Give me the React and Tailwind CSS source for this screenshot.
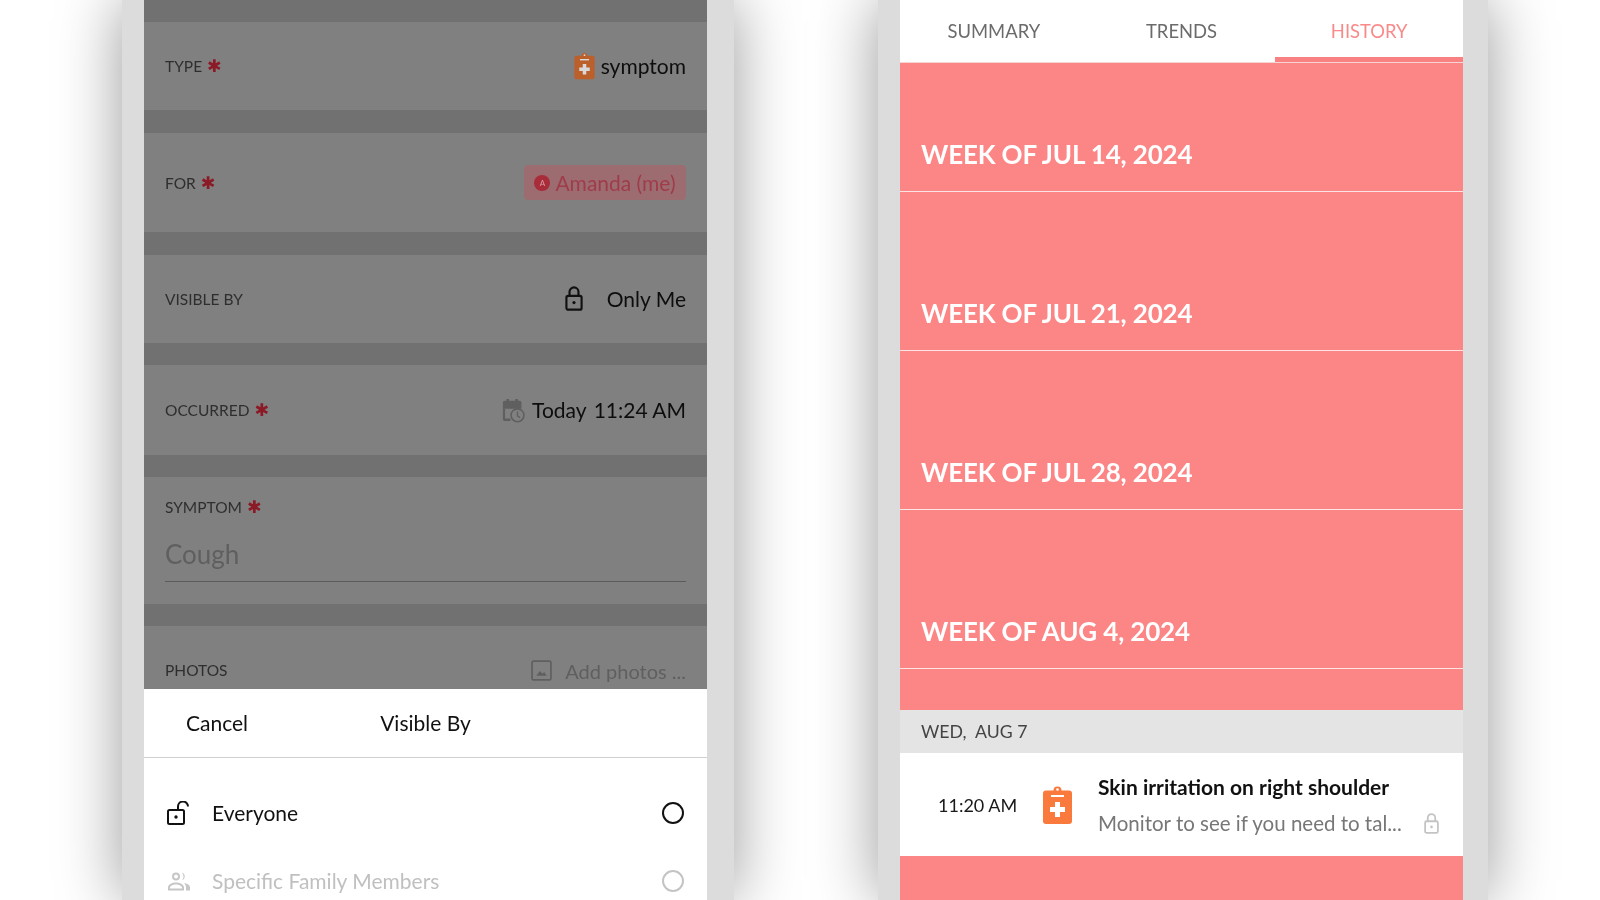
const LATO = { fontFamily: "Lato, 'Open Sans', sans-serif" };

function Clipboard({ className, fill = "#f97a3c", cross = "#fff" }) {
  return (
    <svg viewBox="0 0 30 40" className={className}>
      <path d="M11 5.5a4 4 0 0 1 8 0h7.5a3 3 0 0 1 3 3V36a3 3 0 0 1-3 3h-23a3 3 0 0 1-3-3V8.500a3 3 0 0 1 3-3z" fill={fill} />
      <circle cx="15" cy="4.500" r="1.300" fill={cross} />
      <rect x="8.500" y="10" width="13" height="2" fill={cross} />
      <path d="M12.500 17h5v5h5v5h-5v5h-5v-5h-5v-5h5z" fill={cross} />
    </svg>
  );
}

function Lock({ className, color = "#111" }) {
  return (
    <svg viewBox="0 0 20 28" className={className} fill="none" stroke={color} strokeWidth="2.400">
      <rect x="1.500" y="11" width="17" height="15.500" rx="2" />
      <path d="M5 11V6.500a5 5 0 0 1 10 0V11" />
      <circle cx="10" cy="18.500" r="1.800" fill={color} stroke="none" />
    </svg>
  );
}

function OpenLock({ className }) {
  return (
    <svg viewBox="0 0 24 24" className={className} fill="none" stroke="#111" strokeWidth="2">
      <rect x="1" y="9" width="16" height="14" rx="1.500" />
      <path d="M11 9V5.500a5 5 0 0 1 10 0" />
      <circle cx="9" cy="16" r="1.700" fill="#111" stroke="none" />
    </svg>
  );
}

function CalendarClock({ className }) {
  return (
    <svg viewBox="0 0 26 28" className={className}>
      <path d="M1 5a2 2 0 0 1 2-2h2V1h3v2h7V1h3v2h2a2 2 0 0 1 2 2v7H1z" fill="#5f5f5f" />
      <path d="M1 12h2.500v11h6v3H3a2 2 0 0 1-2-2z" fill="#5f5f5f" />
      <circle cx="17.500" cy="19.500" r="7.300" fill="#808080" stroke="#5f5f5f" strokeWidth="1.800" />
      <path d="M17.500 15v5l3 2" fill="none" stroke="#5f5f5f" strokeWidth="1.500" />
    </svg>
  );
}

function ImageIcon({ className }) {
  return (
    <svg viewBox="0 0 20 20" className={className} fill="none" stroke="#5f5f5f" strokeWidth="1.600">
      <rect x="1" y="1" width="18" height="18" rx="1.500" />
      <path d="M5 15l3.500-4.500 2.500 2.500 1.500-1.500L15 15z" fill="#5f5f5f" stroke="none" />
    </svg>
  );
}

function People({ className }) {
  return (
    <svg viewBox="0 0 24 20" className={className} fill="#c6c6c6">
      <path d="M9 1a4 4 0 1 1 0 8 4 4 0 0 1 0-8zm0 2a2 2 0 1 0 0 4 2 2 0 0 0 0-4z" />
      <path d="M15 1.200a4 4 0 0 1 0 7.600 6 6 0 0 0 0-7.600z" />
      <path d="M1 19v-3c0-3 4-5 8-5s8 2 8 5v3zm2-2h12v-1c0-1.500-3-3-6-3s-6 1.500-6 3z" />
      <path d="M17 11.500c3 .5 6 2 6 4.500v3h-4v-3c0-1.800-.8-3.300-2-4.500z" />
    </svg>
  );
}

function Star() {
  return <span className="ml-[5px] font-['DejaVu_Sans'] text-[17.500px] leading-5 text-[#8b1a26]">✱</span>;
}

function Label({ children, star }) {
  return (
    <div className="flex items-center text-[15.500px] leading-5 text-[#2e2e2e]">
      {children}
      {star && <Star />}
    </div>
  );
}

function Band({ h = "h-[23px]" }) {
  return <div className={`${h} bg-[#717171]`} />;
}

function Row({ h, label, star, children }) {
  return (
    <div className={`${h} flex items-center justify-between bg-[#808080] pl-[21px] pr-[21px]`}>
      <Label star={star}>{label}</Label>
      <div className="flex items-center text-[21px] leading-7 text-[#0d0d0d]">{children}</div>
    </div>
  );
}

function Radio({ muted }) {
  return (
    <div className={`h-[22px] w-[22px] rounded-full border-2 ${muted ? "border-[#c4c4c4]" : "border-[#111]"}`} />
  );
}

function LeftPhone() {
  return (
    <div className="ml-[122px] h-[900px] w-[612px] shrink-0 bg-[#dcdcdc] pl-[22px] pr-[27px] shadow-[0_0_60px_rgba(0,0,0,0.4)]">
      <div className="flex h-[900px] flex-col overflow-hidden">
        <div className="h-[22px] bg-[#717171]" />
        <Row h="h-[88px]" label="TYPE" star>
          <Clipboard className="mr-[6px] h-[28px] w-[21px]" fill="#bb5f2b" cross="#d9d9d9" />
          symptom
        </Row>
        <Band />
        <Row h="h-[99px]" label="FOR" star>
          <div className="flex h-[35px] w-[162px] items-center justify-center rounded-[4px] bg-[#9c6c71] text-[#a03c49]">
            <span className="mr-[5px] flex h-[16px] w-[16px] items-center justify-center rounded-full bg-[#a82c3a] text-[8px] text-[#d9a0a5]">A</span>
            Amanda (me)
          </div>
        </Row>
        <Band />
        <Row h="h-[88px]" label="VISIBLE BY">
          <Lock className="mr-[24px] mb-[2px] h-[25px] w-[18px]" />
          Only Me
        </Row>
        <Band h="h-[22px]" />
        <Row h="h-[90px]" label="OCCURRED" star>
          <CalendarClock className="mr-[7px] h-[25px] w-[23px]" />
          <span className="mr-[7px]">Today</span>11:24 AM
        </Row>
        <Band h="h-[22px]" />
        <div className="h-[127px] bg-[#808080] px-[21px] pt-[20px]">
          <Label star>SYMPTOM</Label>
          <div className="mt-[14px] flex h-[51px] items-center border-b-[1.500px] border-[#5c5c5c] pb-[3px] text-[26px] text-[#5f5f5f]">
            Cough
          </div>
        </div>
        <Band h="h-[22px]" />
        <div className="flex h-[63px] items-start justify-between overflow-hidden bg-[#808080] px-[21px] pt-[34px]">
          <Label>PHOTOS</Label>
          <div className="flex items-center text-[20px] leading-5 text-[#5f5f5f]">
            <ImageIcon className="mr-[13px] h-[21px] w-[21px]" />
            Add photos ...
          </div>
        </div>
        <div className="flex h-[69px] shrink-0 items-center border-b-[1.500px] border-[#cfcfcf] bg-white text-[21px] text-[#111]">
          <div className="w-[42px]" />
          <div className="flex-1 text-left">Cancel</div>
          <div>Visible By</div>
          <div className="flex-1" />
          <div className="w-[42px]" />
        </div>
        <div className="flex-1 bg-white pl-[23px] pr-[23px] pt-[36px] text-[21px]">
          <div className="flex h-[38px] items-center justify-between text-[#111]">
            <div className="flex items-center">
              <OpenLock className="mr-[21px] h-[24px] w-[24px]" />
              Everyone
            </div>
            <Radio />
          </div>
          <div className="mt-[30px] flex h-[38px] items-center justify-between text-[#c0c0c0]">
            <div className="flex items-center">
              <People className="mr-[21px] h-[21px] w-[24px]" />
              Specific Family Members
            </div>
            <Radio muted />
          </div>
        </div>
      </div>
    </div>
  );
}

function Week({ h, children }) {
  return (
    <div className={`${h} flex items-end border-b-[1.500px] border-[#fbe4e4] bg-[#fc8585] pb-[23px] pl-[21px] text-[26px] font-bold leading-7 tracking-[-0.15px] text-white`}>
      {children}
    </div>
  );
}

function Tab({ active, children }) {
  return (
    <div className={`relative flex flex-1 items-center justify-center text-[18.400px] ${active ? "text-[#f98a8a]" : "text-[#6b6b6b]"}`}>
      {children}
      {active && <div className="absolute bottom-0 left-0 right-0 h-[5px] bg-[#fa8181]" />}
    </div>
  );
}

function RightPhone() {
  return (
    <div className="ml-[144px] h-[900px] w-[610px] shrink-0 bg-[#dcdcdc] pl-[22px] pr-[25px] shadow-[0_0_60px_rgba(0,0,0,0.4)]">
      <div className="flex h-[900px] flex-col overflow-hidden bg-[#fc8585]">
        <div className="flex h-[63px] shrink-0 border-b border-[#f6d5d5] bg-white pt-[2px]">
          <Tab>SUMMARY</Tab>
          <Tab>TRENDS</Tab>
          <Tab active>HISTORY</Tab>
        </div>
        <Week h="h-[129px]">WEEK OF JUL 14, 2024</Week>
        <Week h="h-[159px]">WEEK OF JUL 21, 2024</Week>
        <Week h="h-[159px]">WEEK OF JUL 28, 2024</Week>
        <Week h="h-[159px]">WEEK OF AUG 4, 2024</Week>
        <div className="h-[41px] shrink-0 bg-[#fc8585]" />
        <div className="flex h-[43px] shrink-0 items-center bg-[#e3e4e3] pl-[21px] pt-[2px] text-[17.700px] text-[#444]">
          WED,&nbsp;&nbsp;AUG 7
        </div>
        <div className="flex h-[103px] shrink-0 items-center bg-white">
          <div className="ml-[38px] w-[80px] whitespace-nowrap pt-[1px] text-[18px] text-[#1a1a1a]">11:20 AM</div>
          <Clipboard className="ml-[24px] h-[40px] w-[31px]" />
          <div className="ml-[25px] flex-1">
            <div className="text-[21px] font-bold leading-6 text-[#111]">Skin irritation on right shoulder</div>
            <div className="mt-[12px] flex items-center text-[20.500px] leading-6 text-[#777]">
              <span>Monitor to see if you need to tal...</span>
              <Lock className="ml-[22px] mt-[2px] h-[21px] w-[15px]" color="#c4c4c4" />
            </div>
          </div>
        </div>
        <div className="flex-1 bg-[#fc8585]" />
      </div>
    </div>
  );
}

export default function App() {
  return (
    <div className="flex h-[900px] w-[1600px] overflow-hidden bg-white blur-[0.4px]" style={LATO}>
      <LeftPhone />
      <RightPhone />
    </div>
  );
}
